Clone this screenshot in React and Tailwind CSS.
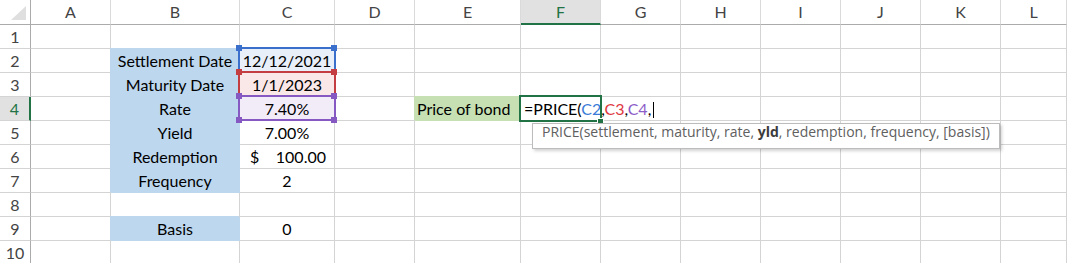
import React from 'react';

const COLS = [
  { k: 'A', w: 'w-[80px]' },
  { k: 'B', w: 'w-[129px]' },
  { k: 'C', w: 'w-[95px]' },
  { k: 'D', w: 'w-[80px]' },
  { k: 'E', w: 'w-[106px]' },
  { k: 'F', w: 'w-[80px]' },
  { k: 'G', w: 'w-[80px]' },
  { k: 'H', w: 'w-[80px]' },
  { k: 'I', w: 'w-[80px]' },
  { k: 'J', w: 'w-[80px]' },
  { k: 'K', w: 'w-[80px]' },
  { k: 'L', w: 'flex-1' },
];

const ROWS = [1, 2, 3, 4, 5, 6, 7, 8, 9, 10];

const LABELS = {
  2: 'Settlement Date',
  3: 'Maturity Date',
  4: 'Rate',
  5: 'Yield',
  6: 'Redemption',
  7: 'Frequency',
  9: 'Basis',
};

const VALUES = {
  2: '12/12/2021',
  3: '1/1/2023',
  4: '7.40%',
  5: '7.00%',
  7: '2',
  9: '0',
};

const RANGES = {
  2: { fill: 'bg-[#e8eff9]', border: 'border-[#3a6fcb]', handle: 'bg-[#3a6fcb]' },
  3: { fill: 'bg-[#fae8e8]', border: 'border-[#c43d41]', handle: 'bg-[#c43d41]' },
  4: { fill: 'bg-[#f1ecf8]', border: 'border-[#8658c2]', handle: 'bg-[#8658c2]' },
};

function Handles({ color }) {
  return (
    <>
      <span className={`absolute z-20 -left-[4px] -top-[4px] w-[6px] h-[6px] ${color}`} />
      <span className={`absolute z-20 left-[91px] -top-[4px] w-[6px] h-[6px] ${color}`} />
      <span className={`absolute z-20 -left-[4px] top-[20px] w-[6px] h-[6px] ${color}`} />
      <span className={`absolute z-20 left-[91px] top-[20px] w-[6px] h-[6px] ${color}`} />
    </>
  );
}

function Tooltip() {
  return (
    <div className="absolute z-30 left-[11px] top-[26px] w-[468px] h-[26px] bg-white border border-[#bcbcbc] shadow-[2px_2px_3px_rgba(0,0,0,0.18)] pl-[9px] font-['Open_Sans',sans-serif] text-[14px] leading-[15px] text-[#606060] whitespace-nowrap">
      PRICE(settlement, maturity, rate, <span className="font-bold text-[#3c3c3c]">yld</span>, redemption, frequency, [basis])
    </div>
  );
}

function Cell({ row, col, w }) {
  const base = `${w} shrink-0 h-[24px] border-r border-b relative whitespace-nowrap text-black`;
  let fill = '';
  let borderColor = 'border-[#d4d4d4]';
  let inner = null;
  let align = '';
  let extra = null;

  if (col === 'B' && LABELS[row]) {
    fill = 'bg-[#bdd7ee] shadow-[-1px_-1px_0_#bdd7ee]';
    borderColor = 'border-[#bdd7ee]';
    inner = LABELS[row];
    align = 'text-center';
  }

  if (col === 'C') {
    const rg = RANGES[row];
    if (rg) {
      fill = rg.fill;
      extra = (
        <>
          <span className={`absolute z-10 -left-[2px] -top-[2px] w-[98px] h-[26px] border-2 ${rg.border}`} />
          <Handles color={rg.handle} />
        </>
      );
    }
    if (row === 6) {
      inner = (
        <div className="flex justify-between pl-[10px] pr-[8px]">
          <span>$</span>
          <span>100.00</span>
        </div>
      );
    } else if (VALUES[row]) {
      inner = VALUES[row];
      align = 'text-center';
    }
  }

  if (col === 'E' && row === 4) {
    fill = 'bg-[#c6e0b4] shadow-[-1px_-1px_0_#c6e0b4]';
    borderColor = 'border-[#c6e0b4]';
    inner = 'Price of bond';
    align = 'pl-[2px]';
  }

  if (col === 'F' && row === 4) {
    inner = (
      <span>
        =PRICE(<span className="text-[#3a7bd8]">C2</span>,<span className="text-[#e0393f]">C3</span>,<span className="text-[#8c5cc8]">C4</span>,
        <span className="inline-block w-px h-[16px] bg-black align-[-3px] ml-[2px]" />
      </span>
    );
    align = 'pl-[3px]';
    extra = (
      <>
        <span className="absolute z-10 -left-[2px] -top-[2px] w-[83px] h-[27px] border-2 border-[#217346]" />
        <span className="absolute z-20 left-[76px] top-[21px] w-[7px] h-[6px] bg-[#217346] border border-white" />
        <Tooltip />
      </>
    );
  }

  return (
    <div className={`${base} ${borderColor} ${fill}`}>
      {inner !== null && <div className={`leading-[23px] ${align}`}>{inner}</div>}
      {extra}
    </div>
  );
}

function HeaderRow() {
  return (
    <div className="flex h-[25px]">
      <div className="w-[31px] shrink-0 h-[25px] border-r border-b border-[#ababab] relative">
        <svg width="30" height="24" className="block">
          <polygon points="26,6 26,20 11,20" fill="#dfdfdf" />
        </svg>
      </div>
      {COLS.map((c) =>
        c.k === 'F' ? (
          <div
            key={c.k}
            className={`${c.w} shrink-0 h-[25px] border-r border-[#d9d9d9] border-b-2 border-b-[#217346] bg-[#e1e1e1] text-center leading-[24px] text-[#217346]`}
          >
            {c.k}
          </div>
        ) : (
          <div
            key={c.k}
            className={`${c.w} shrink-0 h-[25px] border-r border-[#dadada] border-b border-b-[#ababab] text-center leading-[24px] text-[#444]`}
          >
            {c.k}
          </div>
        )
      )}
    </div>
  );
}

function Row({ r }) {
  return (
    <div className="flex h-[24px]">
      {r === 4 ? (
        <div className="w-[31px] shrink-0 h-[24px] border-r-2 border-r-[#217346] border-b border-b-[#d4d4d4] bg-[#e1e1e1] text-center leading-[23px] text-[#217346]">
          {r}
        </div>
      ) : (
        <div className="w-[31px] shrink-0 h-[24px] border-r border-r-[#ababab] border-b border-b-[#d4d4d4] text-center leading-[23px] text-[#444]">
          {r}
        </div>
      )}
      {COLS.map((c) => (
        <Cell key={c.k} row={r} col={c.k} w={c.w} />
      ))}
    </div>
  );
}

export default function App() {
  return (
    <div className="w-[1067px] h-[263px] overflow-hidden bg-white font-['Lato',sans-serif] text-[16px]">
      <HeaderRow />
      {ROWS.map((r) => (
        <Row key={r} r={r} />
      ))}
    </div>
  );
}
